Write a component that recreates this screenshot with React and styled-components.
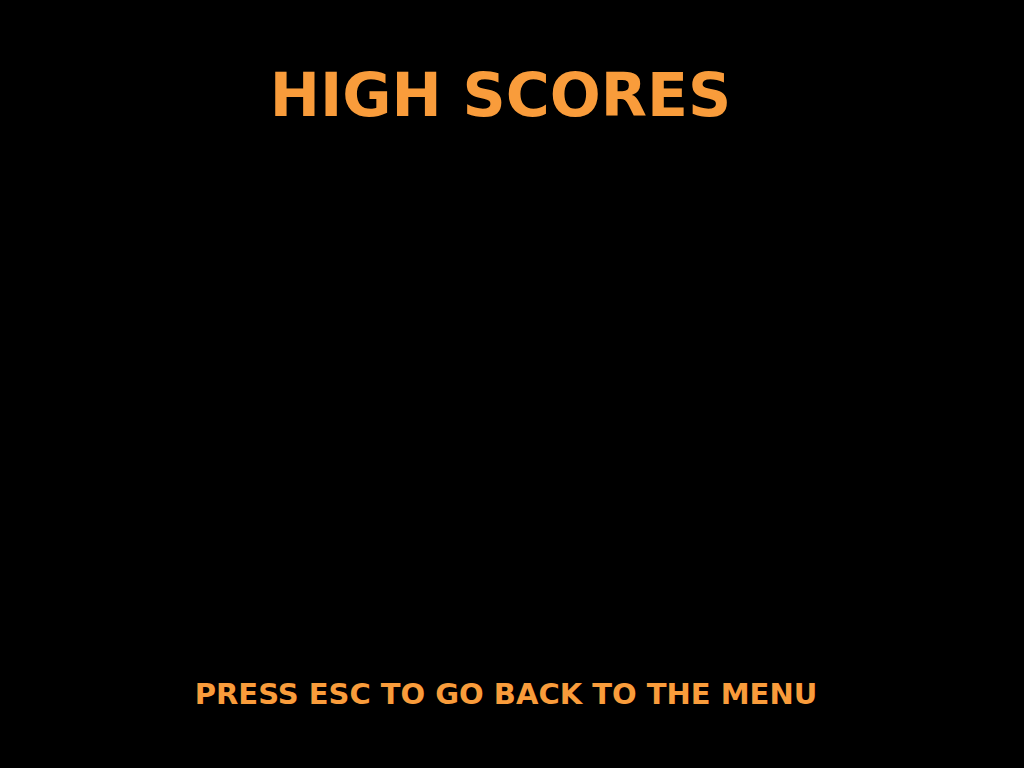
import React from "react";
import styled, { createGlobalStyle } from "styled-components";

const Global = createGlobalStyle`
  html, body { margin: 0; padding: 0; background: #000; }
  #root { width: 1024px; height: 768px; }
`;

const Screen = styled.div`
  width: 1024px;
  height: 768px;
  background: #000;
  display: flex;
  flex-direction: column;
  align-items: center;
  font-family: "DejaVu Sans", "Liberation Sans", sans-serif;
  font-weight: bold;
  color: #f99c3b;
  box-sizing: border-box;
`;

const Title = styled.h1`
  margin: 60px 23px 0 0;
  font-size: 60px;
  line-height: 70px;
  font-weight: bold;
`;

const Scores = styled.div`
  flex: 1;
`;

const Footer = styled.div`
  font-size: 29px;
  line-height: 34px;
  margin: 0 12px 57px 0;
`;

export default function App() {
  return (
    <>
      <Global />
      <Screen>
        <Title>HIGH SCORES</Title>
        <Scores />
        <Footer>PRESS ESC TO GO BACK TO THE MENU</Footer>
      </Screen>
    </>
  );
}
